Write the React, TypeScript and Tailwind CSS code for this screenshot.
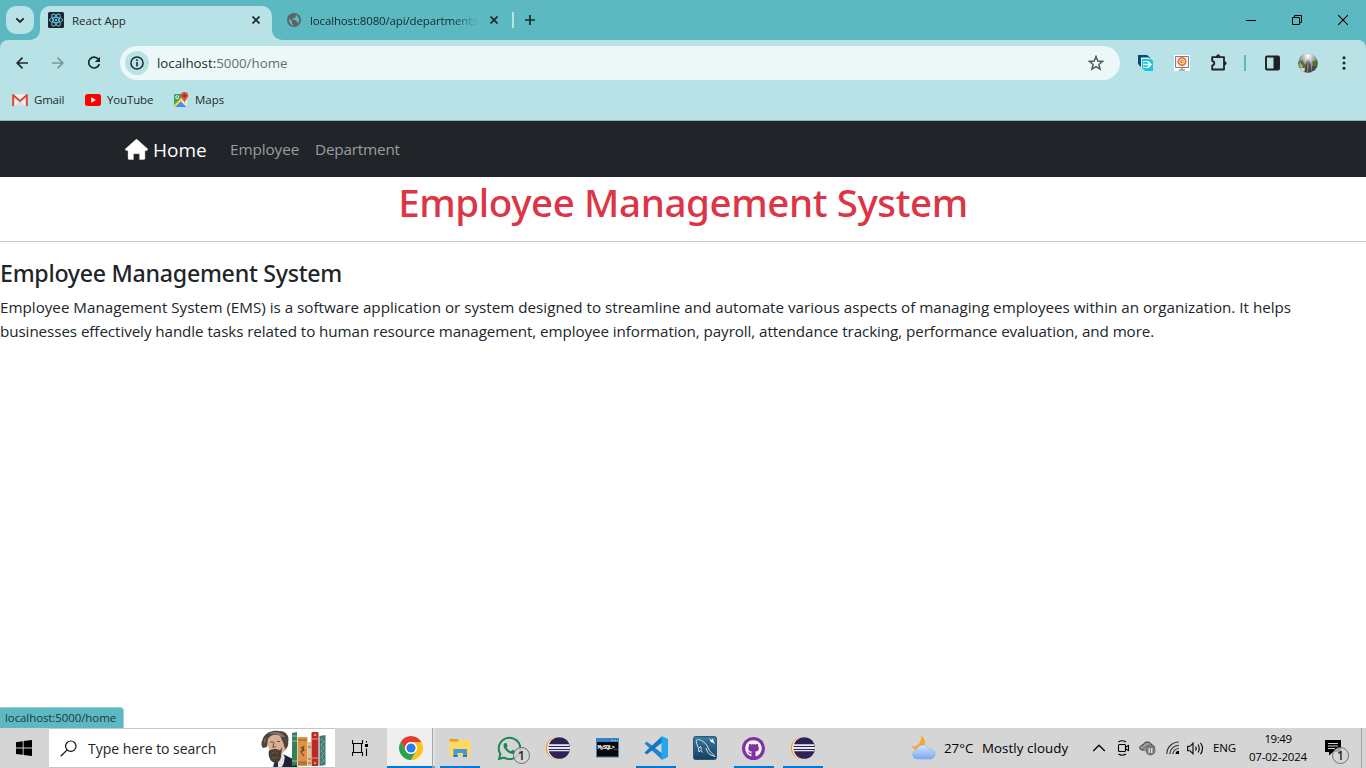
import React from "react";
import type { ReactNode } from "react";
import { FaGithub, FaWhatsapp } from "react-icons/fa";

function Flare({ right }: { right?: boolean }) {
  return (
    <svg
      className={right ? "absolute bottom-0 -right-[10px]" : "absolute bottom-0 -left-[10px]"}
      width="10"
      height="10"
      viewBox="0 0 10 10"
    >
      <path d={right ? "M0 0A10 10 0 0 0 10 10H0Z" : "M10 0A10 10 0 0 1 0 10H10Z"} fill="#b8e2e5" />
    </svg>
  );
}

function Cross() {
  return (
    <svg width="8" height="8" viewBox="0 0 8 8" className="shrink-0">
      <path d="M0.5 0.5L7.5 7.5M7.5 0.5L0.5 7.5" stroke="#1f2a2c" strokeWidth="1.7" />
    </svg>
  );
}

function TabStrip() {
  return (
    <div className="flex h-10 bg-[#5cb8c1] pl-[6px]">
      <div className="mt-[6px] flex h-7 w-7 items-center justify-center rounded-[10px] bg-[#b8e2e5]">
        <svg width="10" height="7" viewBox="0 0 10 7">
          <path d="M1.3 1.3L5 5L8.7 1.3" fill="none" stroke="#1f2a2c" strokeWidth="1.9" />
        </svg>
      </div>
      <div className="relative ml-[6px] mt-[6px] flex h-[34px] w-[232px] items-center rounded-t-[10px] bg-[#b8e2e5] pb-[6px] pl-2 pr-[12px]">
        <Flare />
        <svg width="16" height="16" viewBox="0 0 16 16" className="shrink-0">
          <rect width="16" height="16" rx="1.5" fill="#20232a" />
          <g fill="none" stroke="#61c9e8" strokeWidth="0.9">
            <ellipse cx="8" cy="8" rx="6.7" ry="2.6" />
            <ellipse cx="8" cy="8" rx="6.7" ry="2.6" transform="rotate(60 8 8)" />
            <ellipse cx="8" cy="8" rx="6.7" ry="2.6" transform="rotate(120 8 8)" />
          </g>
          <circle cx="8" cy="8" r="1.2" fill="#61c9e8" />
        </svg>
        <span className="ml-2 flex-1 pt-px text-[11.5px] leading-4 text-[#1f2a2c]">React App</span>
        <Cross />
        <Flare right />
      </div>
      <div className="flex h-10 items-center pl-[15px]">
        <svg width="14" height="14" viewBox="0 0 14 14" className="shrink-0">
          <circle cx="7" cy="7" r="7" fill="#5f6368" />
          <path d="M2 5.2L5 8.2V10.5L7 12.5C3.6 12.3 1.7 9.6 2 5.2ZM8.5 1.8L9 3.5L7 5.5H5.5V7H8.5L10 9L11.5 10C12.8 7.6 12.5 3.5 8.5 1.8Z" fill="#5cb8c1" />
        </svg>
        <span className="ml-[9px] w-[168px] whitespace-nowrap bg-gradient-to-r from-[#12292d] from-[84%] to-[#5cb8c1] bg-clip-text pt-px text-[11.5px] leading-4 tracking-[-0.14px] text-transparent">
          localhost:8080/api/departments
        </span>
        <span className="ml-[12px] flex"><Cross /></span>
        <div className="ml-[14px] h-4 w-[2px] bg-[#b8e2e5]" />
        <svg width="10" height="10" viewBox="0 0 10 10" className="ml-[11px]">
          <path d="M5 0V10M0 5H10" stroke="#1f2a2c" strokeWidth="1.7" />
        </svg>
      </div>
      <div className="ml-auto flex h-10 items-center pr-[18px]">
        <svg width="10" height="10" viewBox="0 0 10 10"><path d="M0 5.5H10" stroke="#000" /></svg>
        <svg width="10" height="10" viewBox="0 0 10 10" className="ml-9">
          <path d="M0.5 2.5H7.5V9.5H0.5ZM2.5 2.5V0.5H9.5V7.5H7.5" fill="none" stroke="#000" />
        </svg>
        <svg width="10" height="10" viewBox="0 0 10 10" className="ml-9">
          <path d="M0 0L10 10M10 0L0 10" stroke="#000" strokeWidth="1.1" />
        </svg>
      </div>
    </div>
  );
}

function Arrow({ back }: { back?: boolean }) {
  return (
    <svg width="12" height="12" viewBox="0 0 12 12">
      <path
        d={back ? "M12 6H1.5M6.5 0.7L1.2 6L6.5 11.3" : "M0 6H10.5M5.5 0.7L10.8 6L5.5 11.3"}
        fill="none"
        stroke={back ? "#1f2a2c" : "#7b989b"}
        strokeWidth="1.7"
      />
    </svg>
  );
}

function Toolbar() {
  return (
    <div className="bg-[#5cb8c1]">
      <div className="flex h-[46px] items-center rounded-t-lg bg-[#b8e2e5] pl-4">
        <Arrow back />
        <span className="ml-6 flex"><Arrow /></span>
        <svg width="14" height="14" viewBox="0 0 14 14" className="ml-[23px]">
          <path d="M11.4 3.3A5.4 5.4 0 1 0 12.3 8" fill="none" stroke="#1f2a2c" strokeWidth="1.7" />
          <path d="M13 0.8V6H7.8Z" fill="#1f2a2c" />
        </svg>
        <div className="ml-[19px] flex h-[34px] w-[1000px] items-center rounded-full bg-[#ecf8f8] pl-[5px] pr-4">
          <div className="flex h-6 w-6 items-center justify-center rounded-full bg-[#b8e2e5]">
            <svg width="14" height="14" viewBox="0 0 14 14">
              <circle cx="7" cy="7" r="6.1" fill="none" stroke="#1f2a2c" strokeWidth="1.5" />
              <path d="M7 3.3V4.9M7 6.1V10.6" stroke="#1f2a2c" strokeWidth="1.6" />
            </svg>
          </div>
          <span className="ml-2 text-[13.3px] leading-5 text-[#5f6f71]">
            <span className="text-[#1f2a2c]">localhost:</span>5000/home
          </span>
          <svg width="16" height="16" viewBox="0 0 16 16" className="ml-auto">
            <path d="M8 1.6L9.8 6.1L14.7 6.4L10.9 9.5L12.1 14.2L8 11.6L3.9 14.2L5.1 9.5L1.3 6.4L6.2 6.1Z" fill="none" stroke="#525a5c" strokeWidth="1.5" />
          </svg>
        </div>
        <svg width="16" height="16" viewBox="0 0 16 16" className="ml-[18px]">
          <path d="M0 0H9L12 2.500V4H4V12H3L0 9Z" fill="#0b4a78" />
          <path d="M3 2.500H11L12.500 4.500H5V12H3Z" fill="#eaf7f8" />
          <path d="M4 4H13L15 6V16H7L4 13Z" fill="#14c8e0" />
          <path d="M5.500 7.500V6.500H11M5.500 11.500V12.500H11" fill="none" stroke="#dff8fb" />
          <path d="M5 9.500H12.500M9.800 6.500L12.800 9.500L9.800 12.500" fill="none" stroke="#fff" strokeWidth="1.700" />
        </svg>
        <svg width="16" height="16" viewBox="0 0 16 16" className="ml-5">
          <rect width="16" height="16" fill="#fff" />
          <path d="M1.5 1.5H14.5V12.5H1.5Z" fill="#eef5f8" stroke="#6b8796" />
          <circle cx="8" cy="6.500" r="4.500" fill="#f4731c" />
          <circle cx="8" cy="6.500" r="2.400" fill="none" stroke="#fff" strokeWidth="0.900" />
          <path d="M7.500 6.500H9.500" stroke="#fff" />
          <path d="M8 13V14.5M5 15H11" stroke="#536f80" />
        </svg>
        <svg width="18" height="18" viewBox="0 0 18 18" className="ml-5">
          <path d="M2.2 3.200H14V15.500H2.200V11.500C5 11 5 7.500 2.200 7Z" fill="none" stroke="#1f2124" strokeWidth="1.800" strokeLinejoin="round" />
          <path d="M6.500 2.500A1.700 1.700 0 0 1 9.900 2.500ZM14.500 7.600A1.700 1.700 0 0 1 14.500 11Z" fill="#1f2124" stroke="#1f2124" strokeWidth="0.800" />
        </svg>
        <div className="ml-[16px] h-4 w-[2px] bg-[#5cb8c1]" />
        <svg width="16" height="16" viewBox="0 0 16 16" className="ml-[18px]">
          <rect x="2" y="1.500" width="13" height="13" rx="1" fill="none" stroke="#1f2124" strokeWidth="1.900" />
          <path d="M9.500 1H15V15H9.500Z" fill="#1f2124" />
        </svg>
        <svg width="20" height="20" viewBox="0 0 20 20" className="ml-[18px]">
          <defs>
            <clipPath id="avatar"><circle cx="10" cy="10" r="9.8" /></clipPath>
            <radialGradient id="glow" cx="0.5" cy="0.15" r="0.45"><stop offset="0" stopColor="#fff" /><stop offset="1" stopColor="#fff" stopOpacity="0" /></radialGradient>
          </defs>
          <g clipPath="url(#avatar)">
            <rect width="20" height="20" fill="#8e9a9c" />
            <path d="M2 3L7 1V8H2ZM13 2L18 4V8H14Z" fill="#7d8c88" />
            <path d="M0 9L5 7L7 12L6 20H0ZM14 8L20 7V14H15Z" fill="#4f6e34" />
            <path d="M8 9L10 6L12 9L14 20H6ZM14 13H20V18H14Z" fill="#4b4747" />
            <path d="M2 9L5 13L4 16L1 13Z" fill="#9db060" />
            <path d="M2 15H7L6 20H2Z" fill="#d2d6d3" />
            <path d="M9 10L11 12L10 20H9Z" fill="#8b7771" />
            <rect width="20" height="20" fill="url(#glow)" />
          </g>
        </svg>
        <svg width="4" height="14" viewBox="0 0 4 14" className="ml-[24px]">
          <g fill="#1f2124"><circle cx="2" cy="1.7" r="1.5" /><circle cx="2" cy="7" r="1.5" /><circle cx="2" cy="12.3" r="1.5" /></g>
        </svg>
      </div>
    </div>
  );
}

function Bookmarks() {
  return (
    <div className="flex h-[35px] items-center border-b border-[#8cb4b7] bg-[#b8e2e5] pb-[6px] pl-3 text-[11.5px] leading-4 text-[#1f2a2c]">
      <svg width="16" height="12" viewBox="0 0 16 12">
        <path d="M1 0.5H15V12H1Z" fill="#f1f1f1" />
        <path d="M3 12L8 7L13 12Z" fill="#dcdcdc" />
        <path d="M1.2 12V1.2L8 7L14.8 1.2V12" fill="none" stroke="#e0463a" strokeWidth="2" />
      </svg>
      <span className="ml-[6px] w-[30px] tracking-[-0.2px]">Gmail</span>
      <svg width="16" height="12" viewBox="0 0 16 12" className="ml-[21px]">
        <rect width="16" height="12" rx="2.5" fill="#f00" />
        <path d="M6.3 3.3L10.8 6L6.3 8.7Z" fill="#fff" />
      </svg>
      <span className="ml-[6px] w-[46px] tracking-[-0.15px]">YouTube</span>
      <svg width="16" height="16" viewBox="0 0 16 16" className="ml-[20px]">
        <path d="M1 3Q1 2 2 2H13Q14 2 14 3V14Q14 15 13 15H2Q1 15 1 14Z" fill="#e2e4e6" />
        <path d="M1 3Q1 2 2 2H10L11 4L1 14Z" fill="#3ba457" />
        <path d="M10 4L12.500 6L3 15H1V13Z" fill="#fbd34a" />
        <path d="M2 15L7.800 9.500L13.500 15Z" fill="#4a8af4" />
        <circle cx="4.200" cy="5.200" r="1.500" fill="none" stroke="#fff" strokeWidth="0.9" />
        <path d="M11.500 0A3.700 3.700 0 0 1 15.200 3.800C15.200 6 12.300 7.500 11.500 10.800C10.700 7.500 7.800 6 7.800 3.800A3.700 3.700 0 0 1 11.500 0Z" fill="#dd4b3e" />
        <circle cx="11.500" cy="3.700" r="1.300" fill="#7c2620" />
      </svg>
      <span className="ml-[6px]">Maps</span>
    </div>
  );
}

function Page() {
  return (
    <main className="relative h-[607px] bg-white text-[#212529]">
      <nav className="flex h-14 items-center bg-[#212529] pl-[125px]">
        <svg width="23" height="21" viewBox="0 0 23 21" className="mt-px">
          <path d="M11.5 0L23 10.3L21.8 11.6H19.9V19.5Q19.9 20.5 18.9 20.5H14.6V14.7H8.4V20.5H4.1Q3.1 20.5 3.1 19.5V11.6H1.2L0 10.3Z" fill="#fff" stroke="#fff" strokeWidth="0.4" strokeLinejoin="round" />
        </svg>
        <a className="ml-[5px] w-[77px] pt-px text-[19px] leading-8 text-white">Home</a>
        <a className="w-[85px] text-[15.3px] leading-6 tracking-[-0.1px] text-[#9b9d9f]">Employee</a>
        <a className="text-[15.3px] leading-6 tracking-[-0.2px] text-[#9b9d9f]">Department</a>
      </nav>
      <h1 className="pt-px text-center font-['Noto_Sans','Open_Sans',sans-serif] text-[38.5px] font-medium leading-[48px] tracking-[-0.4px] text-[#dc3545]">
        Employee Management System
      </h1>
      <hr className="mt-[15px] border-t border-[#c7c8c9]" />
      <h2 className="mt-[17px] font-['Noto_Sans','Open_Sans',sans-serif] text-[23.2px] font-medium leading-[29px] tracking-[-0.28px]">
        Employee Management System
      </h2>
      <p className="mt-[7px] whitespace-nowrap text-[15.2px] leading-6">
        Employee Management System (EMS) is a software application or system designed to streamline and automate various aspects of managing employees within an organization. It helps
        <br />
        <span className="tracking-[-0.075px]">
          businesses effectively handle tasks related to human resource management, employee information, payroll, attendance tracking, performance evaluation, and more.
        </span>
      </p>
      <div className="absolute bottom-0 left-0 h-[21px] w-[124px] rounded-tr-[4px] border-r border-t border-[#9fcfd4] bg-[#5cb8c1] pl-[5px] text-[11.5px] leading-[20px] tracking-[-0.09px] text-[#1f3a3e]">
        localhost:5000/home
      </div>
    </main>
  );
}

function Portrait() {
  return (
    <svg width="66" height="38" viewBox="0 0 66 38">
      <path d="M12 38L13 33L22 24L32 29L37 38Z" fill="#252b3d" />
      <path d="M17 29L22 23L25 30L20 38H17Z" fill="#e6e2df" />
      <path d="M24 26L33 31L37 38H22Z" fill="#1d2335" />
      <path d="M7 7C10 2 20 0 25 5C29 10 27 17 25 20L20 24L9 21L6 14Z" fill="#d7b097" />
      <path d="M2 18C-1 14 1 12 2 8C5 2 12 0 18 1C25 1 29 6 27 12C28 15 26 18 24 19L22 12C20 9 20 5 17 5C13 4 9 5 7 9L6 17Z" fill="#51443b" />
      <path d="M8 4C13 1 20 1 24 7L20 7C17 3 13 4 8 4ZM3 10L5 8L4 14Z" fill="#84736a" />
      <path d="M9 12H12M16 11.500H19M13 12L12 17H15" fill="none" stroke="#72503f" strokeWidth="1.1" />
      <path d="M8 20.500C12 18.500 16 18.500 19 20.500L21 17L20 27C19 33 14 34 11 31.500C8 29 7 24 8 20.500Z" fill="#4b3d33" />
      <path d="M11 23C14 21 16 22 17 24M11 27Q14 30 17 27" stroke="#6c5a4c" fill="none" />
      <path d="M31 3L36 2V35L31 36Z" fill="#2f8259" /><path d="M31 6H36M31 11H36M31 31H36" stroke="#b7bd73" />
      <rect x="36.5" y="7" width="10" height="29" rx="1" fill="#de9148" />
      <path d="M37 10H46M37 32H46M37 34H46" stroke="#784b28" strokeWidth="0.8" />
      <path d="M40 17L43 20L40 22L43 26M43 16L41 21" stroke="#69421f" fill="none" strokeWidth="1.1" />
      <path d="M47 12H50V36H47Z" fill="#d8c491" /><path d="M47 17H50M47 29H50M47 33H50" stroke="#8b633e" />
      <rect x="50.5" y="2" width="7" height="34" rx="1" fill="#b8292b" />
      <path d="M51 9H57M51 28H57" stroke="#e0a651" /><path d="M54 3L55.5 6H52.5ZM54 31L55.5 34H52.5Z" fill="#e0a651" />
      <path d="M58.5 6L64.5 5V35L58.5 36Z" fill="#3c7e82" />
      <path d="M60 9L63 12L60 15L63 18L60 21L63 24L60 27L63 30L60 33" stroke="#d5bd72" fill="none" strokeDasharray="1.5 1" />
    </svg>
  );
}

function Chrome() {
  return (
    <svg width="24" height="24" viewBox="0 0 24 24">
      <circle cx="12" cy="12" r="12" fill="#fff" />
      <path d="M1.61 6A12 12 0 0 1 22.39 6H12A6 6 0 0 0 6.8 15Z" fill="#e33b2e" />
      <path d="M22.39 6A12 12 0 0 1 12 24L17.2 15A6 6 0 0 0 12 6Z" fill="#fcc31e" />
      <path d="M12 24A12 12 0 0 1 1.61 6L6.8 15A6 6 0 0 0 17.2 15Z" fill="#2da14c" />
      <circle cx="12" cy="12" r="5.8" fill="#fff" />
      <circle cx="12" cy="12" r="4.6" fill="#2b7de9" />
    </svg>
  );
}

function Explorer() {
  return (
    <svg width="22" height="20" viewBox="0 0 22 20">
      <path d="M0.5 1H9L10.500 2H21.500V17.500H0.500Z" fill="#ffd860" />
      <path d="M0.5 1H9.500V3.500H0.500Z" fill="#e2a01e" />
      <path d="M4.500 11H18V19H14V15H8.500V19H4.500Z" fill="#3f9bdc" />
      <path d="M4.500 17H8.500V19H4.500ZM14 17H18V19H14Z" fill="#2878b8" />
    </svg>
  );
}

function Eclipse() {
  return (
    <svg width="24" height="24" viewBox="0 0 24 24" className="mr-px">
      <circle cx="10.8" cy="12" r="10.8" fill="#f7941e" />
      <circle cx="12" cy="12" r="10.8" fill="#fff" />
      <circle cx="13.200" cy="12" r="10.800" fill="#2c2255" />
      <path d="M3 8.3H23.3V10H2.5ZM2 11.1H24V12.9H2ZM2.5 14H23.500V15.300H3Z" fill="#e9e7f2" />
    </svg>
  );
}

function MysqlShell() {
  return (
    <svg width="23" height="20" viewBox="0 0 23 20">
      <rect x="0.5" y="0.5" width="22" height="18.5" fill="#0a0a0c" stroke="#4f7fae" />
      <path d="M1 1H22V4H1Z" fill="#2b82d0" />
      <path d="M15 2.5H17M18 2.5H20M21 2.5H22" stroke="#8fc3f0" />
      <text x="1.500" y="11" fill="#fff" fontSize="6" fontFamily="Liberation Mono" fontWeight="bold" textLength="20">MySQL&gt;_</text>
    </svg>
  );
}

function Workbench() {
  return (
    <svg width="24" height="24" viewBox="0 0 24 24">
      <defs><linearGradient id="wb" x1="0" y1="0" x2="0" y2="1"><stop offset="0" stopColor="#397b9e" /><stop offset="1" stopColor="#173f60" /></linearGradient></defs>
      <rect x="0.5" y="0.5" width="23" height="23" rx="2" fill="url(#wb)" stroke="#285b7b" />
      <path d="M5.500 12.500C4.500 9 2.500 6 3.500 4.200C5 2.600 8 4.200 10 5.500C13 7.500 15 10.500 16 14C17.500 16.500 20 17.500 22 20.500M5.500 12.500L6 16L7.500 14L9.500 16.500M5.500 12.500L7.500 10.500L8.500 13.500M13 12C13.500 15 15.500 18 18 19L22 20.500" fill="none" stroke="#d7e5ed" strokeWidth="1" />
      <path d="M16 2L18.500 4L20 2.500L20.500 5L22 8L19.500 6.500L18 6Z" fill="#fff" />
    </svg>
  );
}

function TaskButton({ open, children }: { open?: boolean; children: ReactNode }) {
  return (
    <div className="mr-px flex h-10 w-12 flex-col items-center">
      <div className="flex h-[38px] items-center justify-center pt-[2px]">{children}</div>
      {open && <div className="h-[2px] w-10 bg-[#0078d7]" />}
    </div>
  );
}

function Count() {
  return (
    <span className="flex h-[17px] w-[17px] items-center justify-center rounded-full border border-[#6f6f6f] bg-[#d4d4d4]/80 text-[12px] font-semibold leading-none text-[#222]">
      1
    </span>
  );
}

function Taskbar() {
  return (
    <footer className="flex h-10 bg-[#d5d5d5] text-black">
      <div className="flex w-[49px] items-center pl-4">
        <svg width="16" height="16" viewBox="0 0 16 16">
          <path d="M0 2.2L6.700 1.200V7.600H0ZM7.600 1.100L16 0V7.600H7.600ZM0 8.500H6.700V14.800L0 13.900ZM7.600 8.500H16V16L7.600 14.900Z" />
        </svg>
      </div>
      <div className="flex h-10 w-[286px] items-center overflow-hidden border-y border-[#c5c5c5] bg-white pl-[11px]">
        <svg width="17" height="17" viewBox="0 0 17 17" className="shrink-0">
          <circle cx="10.8" cy="6.2" r="5.2" fill="none" stroke="#111" strokeWidth="1.2" />
          <path d="M7.2 9.9L0.7 16.3" stroke="#111" strokeWidth="1.3" />
        </svg>
        <span className="ml-[11px] w-[173px] shrink-0 whitespace-nowrap pt-px text-[14px] leading-5 tracking-[-0.03px] text-[#252525]">Type here to search</span>
        <span className="mt-[1px] shrink-0"><Portrait /></span>
      </div>
      <div className="flex w-[52px] items-center pl-[17px]">
        <svg width="17" height="16" viewBox="0 0 17 16">
          <path d="M0.5 0V3.500H10.500V0M0.500 16V12.500H10.500V16M1.500 3.500V12.500M9.500 3.500V12.500M14.500 1V2.500M14.500 8.500V16" fill="none" stroke="#000" strokeWidth="1.1" />
          <rect x="13" y="4" width="3" height="3" />
        </svg>
      </div>
      <div className="flex h-10 w-[49px]">
        <div className="flex w-[45px] flex-col border-b-2 border-[#0078d7] bg-[#efefef] pl-3 pt-2"><Chrome /></div>
        <div className="w-[3px] border-b-2 border-l border-b-[#4b9fe6] border-l-[#a8a8a8] bg-[#e3e3e3]" />
      </div>
      <TaskButton open><Explorer /></TaskButton>
      <TaskButton>
        <div className="relative flex h-6 w-6 items-center justify-center">
          <FaWhatsapp className="h-[27px] w-[27px] shrink-0 text-[#198754]" />
          <div className="absolute left-4 top-[11px]"><Count /></div>
        </div>
      </TaskButton>
      <TaskButton><Eclipse /></TaskButton>
      <TaskButton><MysqlShell /></TaskButton>
      <TaskButton open>
        <svg width="24" height="24" viewBox="0 0 24 24">
          <path d="M0.5 7.6L2.2 6Q2.800 5.600 3.400 6L18 17.200V23.800Z" fill="#1a86d2" />
          <path d="M0.5 16.4L2.2 18Q2.800 18.400 3.400 18L18 6.800V0.200Z" fill="#1279c0" />
          <path d="M17.5 0L23.2 2.6Q24 3 24 4V20Q24 21 23.2 21.4L17.5 24Z" fill="#24a5f2" />
        </svg>
      </TaskButton>
      <TaskButton><Workbench /></TaskButton>
      <TaskButton open>
        <span className="mr-px flex h-[23px] w-[23px] items-center justify-center rounded-full bg-[#8031a7]">
          <FaGithub className="h-[17px] w-[17px] text-white" />
        </span>
      </TaskButton>
      <TaskButton open><Eclipse /></TaskButton>
      <div className="ml-auto flex h-10 items-center text-[11.5px]">
        <svg width="25" height="24" viewBox="0 0 25 24">
          <defs><linearGradient id="cloud" x1="0" y1="0" x2="0" y2="1"><stop offset="0" stopColor="#d9e8ff" /><stop offset="1" stopColor="#77a6ef" /></linearGradient></defs>
          <path d="M10 0C16 3 16 13 7 14C4 14 1 12 0.5 10C6 12 11 6 10 0Z" fill="#f9a825" />
          <path d="M5.5 23A4.5 4.5 0 0 1 5 14.2A7 7 0 0 1 18 13A5 5 0 1 1 20 23Z" fill="url(#cloud)" stroke="#86aeea" strokeWidth="0.6" />
          <path d="M5 16C8 14 11 15 12 18M12 18C14 15 17 14 19 16" stroke="#a9c5f4" fill="none" />
        </svg>
        <span className="ml-[8px] w-[38px] text-[13.3px] leading-5">27°C</span>
        <span className="w-[86px] whitespace-nowrap text-[13.3px] leading-5 tracking-[0.08px]">Mostly cloudy</span>
        <svg width="14" height="8" viewBox="0 0 14 8" className="ml-[24px]"><path d="M1.2 7L7 1.2L12.8 7" fill="none" stroke="#000" strokeWidth="1.3" /></svg>
        <svg width="13" height="16" viewBox="0 0 13 16" className="ml-[11px]">
          <path d="M2.500 4.500H7.500Q8.500 4.500 8.500 5.500V10.500Q8.500 11.500 7.500 11.500H2.500Q1.500 11.500 1.500 10.500V5.500Q1.500 4.500 2.500 4.500ZM8.500 7.200L11.500 5.500V10.500L8.500 8.800M1.500 2Q5 -0.500 9 2M1.500 14Q5 16.500 9 14" fill="none" stroke="#000" strokeWidth="1.1" />
        </svg>
        <svg width="17" height="15" viewBox="0 0 17 15" className="ml-[9px]">
          <path d="M3 9C-1 8 1 4 4 4C5 0 12 0 12.5 4C16 4 16 8 15 9Z" fill="#999" stroke="#333" />
          <path d="M3 9L10 4L15 8" fill="#bbb" stroke="#333" strokeWidth="0.7" />
          <circle cx="11.5" cy="9.5" r="5" fill="#777" />
          <path d="M10.2 7V12M12.8 7V12" stroke="#fff" strokeWidth="1.1" />
        </svg>
        <svg width="14" height="14" viewBox="0 0 14 14" className="ml-[10px]">
          <path d="M0.8 13A12 12 0 0 1 12.8 1M3.8 13A9 9 0 0 1 12.8 4.3M6.8 13A6 6 0 0 1 12.8 7.5" fill="none" stroke="#333" strokeWidth="1.2" />
          <path d="M9.5 13A3.5 3.5 0 0 1 13 9.8V13Z" />
        </svg>
        <svg width="17" height="13" viewBox="0 0 17 13" className="ml-[7px]">
          <path d="M0.7 4.3H3L6 1.2V11.8L3 8.7H0.7ZM8.5 4.5Q10 6.5 8.5 8.5M11 2.5Q13.5 6.5 11 10.5M13.5 0.8Q17.5 6.5 13.5 12.2" fill="none" stroke="#000" strokeWidth="1.1" />
        </svg>
        <span className="ml-[9px] w-[23px] leading-4 tracking-[-0.1px]">ENG</span>
        <div className="ml-[12px] flex w-[60px] flex-col items-center pb-px leading-[18px]">
          <span className="tracking-[-0.45px]">19:49</span>
          <span className="whitespace-nowrap tracking-[-0.2px]">07-02-2024</span>
        </div>
        <div className="relative ml-[17px] h-6 w-9">
          <svg width="17" height="16" viewBox="0 0 17 16" className="mt-[4px]">
            <path d="M0 0H16V12H8L4 15.5V12H0Z" />
            <path d="M3 3.5H13M3 6H13M3 8.5H10" stroke="#d5d5d5" />
          </svg>
          <div className="absolute left-[7px] top-[11px]"><Count /></div>
        </div>
        <div className="h-10 w-[5px] border-l border-[#a5a5a5]" />
      </div>
    </footer>
  );
}

export default function App() {
  return (
    <div className="flex h-[768px] w-[1366px] flex-col overflow-hidden bg-white font-['Open_Sans','Noto_Sans',sans-serif]">
      <TabStrip />
      <Toolbar />
      <Bookmarks />
      <Page />
      <Taskbar />
    </div>
  );
}
